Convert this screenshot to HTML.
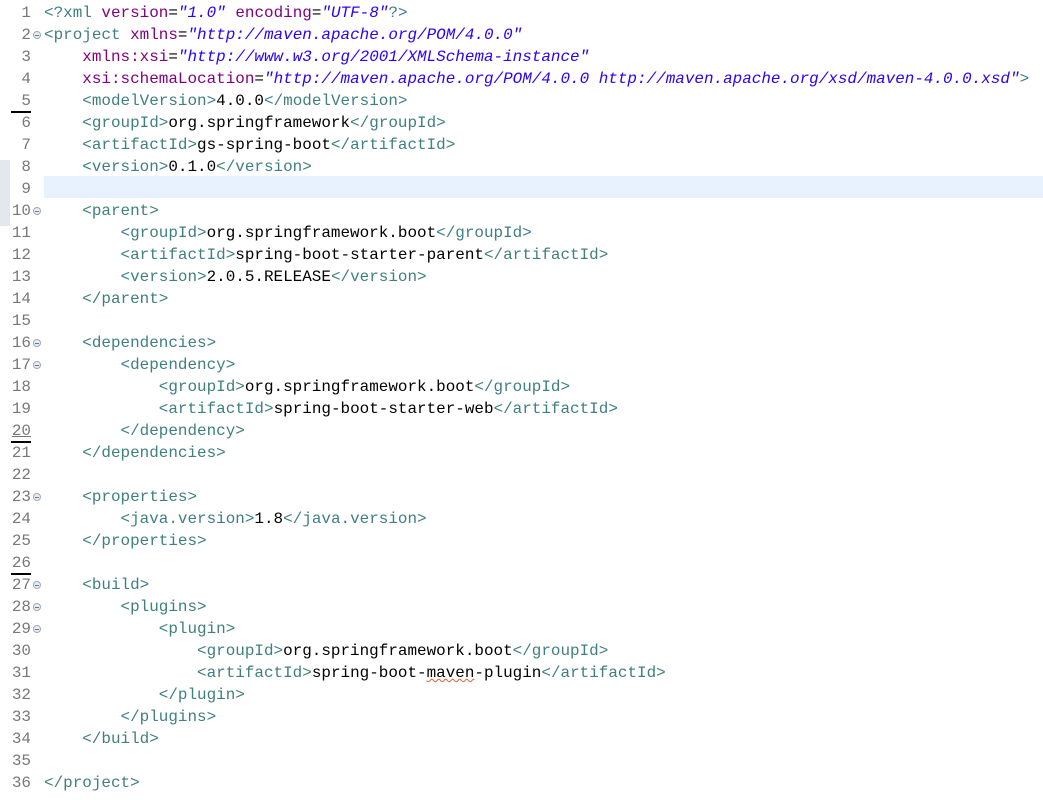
<!DOCTYPE html>
<html><head><meta charset="utf-8"><style>
body{margin:0;background:#fff;width:1043px;height:800px;overflow:hidden;position:relative;font-family:"Liberation Mono","DejaVu Sans Mono",monospace;font-size:15.95px}
.l{position:absolute;left:0;height:22px;line-height:22px;width:1043px;white-space:pre;margin-top:1px}
.n{position:absolute;left:0;width:31px;text-align:right;color:#787878}
.c{position:absolute;left:44px}
.t{color:#3f7f7f}.a{color:#7f007f}.s{color:#2a00ff;font-style:italic}
.f{position:absolute;left:33px;top:7px;width:6px;height:6px;border:1px solid #9ab;border-radius:50%;background:#e8eef4}
.f:after{content:"";position:absolute;left:1px;top:2.5px;width:4px;height:1px;background:#678}
.u{position:absolute;left:11px;width:20px;height:2px;background:#000;top:-1px}
.sp{text-decoration:underline wavy #e06030;text-decoration-thickness:1px}
</style></head><body>
<div style="position:absolute;left:44px;top:176px;width:999px;height:22px;background:#e8f2fe"></div>
<div style="position:absolute;left:0;top:160px;width:10px;height:66px;background:#e4e8ee"></div>
<div class="l" style="top:1px"><span class="n">1</span><span class="c"><span class="t">&lt;?xml </span><span class="a">version</span>=<span class="s">"1.0"</span> <span class="a">encoding</span>=<span class="s">"UTF-8"</span><span class="t">?&gt;</span></span></div>
<div class="l" style="top:23px"><span class="n">2</span><i class="f"></i><span class="c"><span class="t">&lt;project </span><span class="a">xmlns</span>=<span class="s">"http://maven.apache.org/POM/4.0.0"</span></span></div>
<div class="l" style="top:45px"><span class="n">3</span><span class="c">    <span class="a">xmlns:xsi</span>=<span class="s">"http://www.w3.org/2001/XMLSchema-instance"</span></span></div>
<div class="l" style="top:67px"><span class="n">4</span><span class="c">    <span class="a">xsi:schemaLocation</span>=<span class="s">"http://maven.apache.org/POM/4.0.0 http://maven.apache.org/xsd/maven-4.0.0.xsd"</span><span class="t">&gt;</span></span></div>
<div class="l" style="top:89px"><span class="n">5</span><span class="c">    <span class="t">&lt;modelVersion&gt;</span>4.0.0<span class="t">&lt;/modelVersion&gt;</span></span></div>
<div class="l" style="top:111px"><i class="u"></i><span class="n">6</span><span class="c">    <span class="t">&lt;groupId&gt;</span>org.springframework<span class="t">&lt;/groupId&gt;</span></span></div>
<div class="l" style="top:133px"><span class="n">7</span><span class="c">    <span class="t">&lt;artifactId&gt;</span>gs-spring-boot<span class="t">&lt;/artifactId&gt;</span></span></div>
<div class="l" style="top:155px"><span class="n">8</span><span class="c">    <span class="t">&lt;version&gt;</span>0.1.0<span class="t">&lt;/version&gt;</span></span></div>
<div class="l" style="top:177px"><span class="n">9</span></div>
<div class="l" style="top:199px"><span class="n">10</span><i class="f"></i><span class="c">    <span class="t">&lt;parent&gt;</span></span></div>
<div class="l" style="top:221px"><span class="n">11</span><span class="c">        <span class="t">&lt;groupId&gt;</span>org.springframework.boot<span class="t">&lt;/groupId&gt;</span></span></div>
<div class="l" style="top:243px"><span class="n">12</span><span class="c">        <span class="t">&lt;artifactId&gt;</span>spring-boot-starter-parent<span class="t">&lt;/artifactId&gt;</span></span></div>
<div class="l" style="top:265px"><span class="n">13</span><span class="c">        <span class="t">&lt;version&gt;</span>2.0.5.RELEASE<span class="t">&lt;/version&gt;</span></span></div>
<div class="l" style="top:287px"><span class="n">14</span><span class="c">    <span class="t">&lt;/parent&gt;</span></span></div>
<div class="l" style="top:309px"><span class="n">15</span></div>
<div class="l" style="top:331px"><span class="n">16</span><i class="f"></i><span class="c">    <span class="t">&lt;dependencies&gt;</span></span></div>
<div class="l" style="top:353px"><span class="n">17</span><i class="f"></i><span class="c">        <span class="t">&lt;dependency&gt;</span></span></div>
<div class="l" style="top:375px"><span class="n">18</span><span class="c">            <span class="t">&lt;groupId&gt;</span>org.springframework.boot<span class="t">&lt;/groupId&gt;</span></span></div>
<div class="l" style="top:397px"><span class="n">19</span><span class="c">            <span class="t">&lt;artifactId&gt;</span>spring-boot-starter-web<span class="t">&lt;/artifactId&gt;</span></span></div>
<div class="l" style="top:419px"><span class="n" style="text-decoration:underline">20</span><span class="c">        <span class="t">&lt;/dependency&gt;</span></span></div>
<div class="l" style="top:441px"><i class="u"></i><span class="n">21</span><span class="c">    <span class="t">&lt;/dependencies&gt;</span></span></div>
<div class="l" style="top:463px"><span class="n">22</span></div>
<div class="l" style="top:485px"><span class="n">23</span><i class="f"></i><span class="c">    <span class="t">&lt;properties&gt;</span></span></div>
<div class="l" style="top:507px"><span class="n">24</span><span class="c">        <span class="t">&lt;java.version&gt;</span>1.8<span class="t">&lt;/java.version&gt;</span></span></div>
<div class="l" style="top:529px"><span class="n">25</span><span class="c">    <span class="t">&lt;/properties&gt;</span></span></div>
<div class="l" style="top:551px"><span class="n">26</span></div>
<div class="l" style="top:573px"><i class="u"></i><span class="n">27</span><i class="f"></i><span class="c">    <span class="t">&lt;build&gt;</span></span></div>
<div class="l" style="top:595px"><span class="n">28</span><i class="f"></i><span class="c">        <span class="t">&lt;plugins&gt;</span></span></div>
<div class="l" style="top:617px"><span class="n">29</span><i class="f"></i><span class="c">            <span class="t">&lt;plugin&gt;</span></span></div>
<div class="l" style="top:639px"><span class="n">30</span><span class="c">                <span class="t">&lt;groupId&gt;</span>org.springframework.boot<span class="t">&lt;/groupId&gt;</span></span></div>
<div class="l" style="top:661px"><span class="n">31</span><span class="c">                <span class="t">&lt;artifactId&gt;</span>spring-boot-<span class="sp">maven</span>-plugin<span class="t">&lt;/artifactId&gt;</span></span></div>
<div class="l" style="top:683px"><span class="n">32</span><span class="c">            <span class="t">&lt;/plugin&gt;</span></span></div>
<div class="l" style="top:705px"><span class="n">33</span><span class="c">        <span class="t">&lt;/plugins&gt;</span></span></div>
<div class="l" style="top:727px"><span class="n">34</span><span class="c">    <span class="t">&lt;/build&gt;</span></span></div>
<div class="l" style="top:749px"><span class="n">35</span></div>
<div class="l" style="top:771px"><span class="n">36</span><span class="c"><span class="t">&lt;/project&gt;</span></span></div>
</body></html>
